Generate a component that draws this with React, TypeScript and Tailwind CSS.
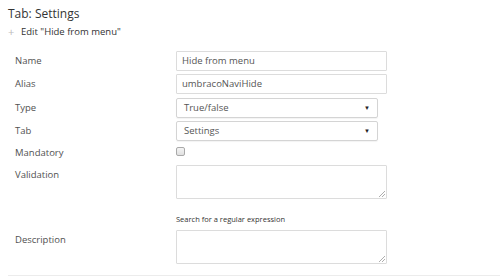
const font = { fontFamily: '"Open Sans", "Liberation Sans", sans-serif' };

const Label = ({ children }: { children: React.ReactNode }) => (
  <div className="w-[168px] shrink-0 pl-[7px] pt-[2px] text-[9.5px] leading-[16px] text-[#515151]">
    {children}
  </div>
);

const TextInput = ({ value }: { value: string }) => (
  <div className="w-[211px] h-[20px] border border-[#dcdcdc] rounded-[1px] px-[5px] text-[9.5px] leading-[18px] text-[#555]">
    {value}
  </div>
);

const SelectBox = ({ value }: { value: string }) => (
  <div className="w-[202px] h-[20px] border border-[#d4d4d4] rounded-[2px] pl-[7px] pr-[7px] flex items-center justify-between text-[9.5px] text-[#555] shadow-[0_1px_1px_rgba(0,0,0,0.05)]">
    <span>{value}</span>
    <span className="text-[6px] text-[#222]">▼</span>
  </div>
);

const TextArea = () => (
  <div className="relative w-[211px] h-[34px] border border-[#dcdcdc] rounded-[1px]">
    <svg className="absolute right-[1px] bottom-[1px]" width="6" height="6" viewBox="0 0 6 6">
      <path d="M6 0 L0 6 M6 3 L3 6" stroke="#999" strokeWidth="0.8" />
    </svg>
  </div>
);

export default function App() {
  return (
    <div className="w-[500px] h-[276px] bg-white pl-[8px] overflow-hidden" style={font}>
      <div className="pt-[5px] text-[12px] leading-[18px] text-[#343434]">Tab: Settings</div>
      <div className="flex items-center h-[18px] text-[9.5px] text-[#333]">
        <span className="text-[#bbb] text-[11px] w-[13px] leading-none -mt-[1px]">+</span>
        <span>Edit "Hide from menu"</span>
      </div>

      <div className="pt-[10px] flex flex-col">
        <div className="flex h-[23px]">
          <Label>Name</Label>
          <TextInput value="Hide from menu" />
        </div>
        <div className="flex h-[23px]">
          <Label>Alias</Label>
          <TextInput value="umbracoNaviHide" />
        </div>
        <div className="flex h-[23px] pt-[1px]">
          <Label>Type</Label>
          <SelectBox value="True/false" />
        </div>
        <div className="flex h-[23px] pt-[1px]">
          <Label>Tab</Label>
          <SelectBox value="Settings" />
        </div>
        <div className="flex h-[22px]">
          <Label>Mandatory</Label>
          <div className="pt-[4px]">
            <div className="w-[9px] h-[9px] rounded-[2px] border border-[#a9a9a9] bg-gradient-to-b from-[#f4f4f4] to-[#e0e0e0]" />
          </div>
        </div>
        <div className="flex">
          <Label>Validation</Label>
          <div>
            <TextArea />
            <div className="pt-[14px] h-[31px] text-[7.5px] leading-[12px] text-[#333]">
              Search for a regular expression
            </div>
          </div>
        </div>
        <div className="flex">
          <Label>Description</Label>
          <TextArea />
        </div>
      </div>
      <div className="mt-[11px] border-t border-[#ececec]" />
    </div>
  );
}
